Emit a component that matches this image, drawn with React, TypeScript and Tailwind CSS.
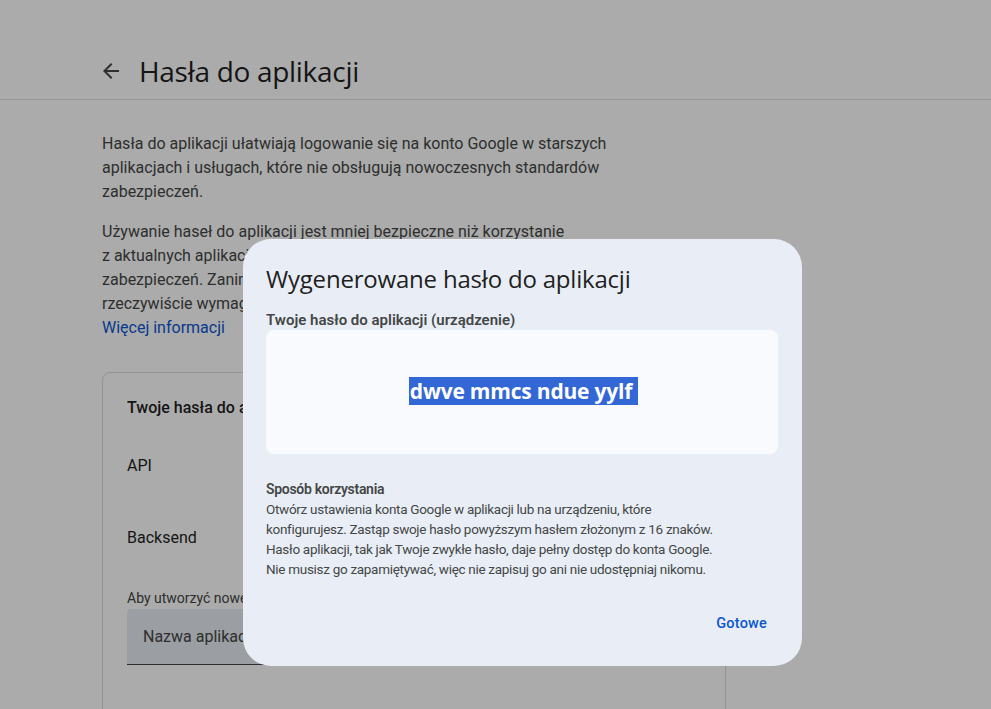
import { useState } from 'react'

const body = { fontFamily: 'Roboto, "Liberation Sans", sans-serif' }
const display = { fontFamily: '"Open Sans", Roboto, sans-serif' }

function BackArrow() {
  return (
    <svg viewBox="0 0 24 24" className="w-6 h-6 fill-[#444746]">
      <path d="M20 11H7.83l5.59-5.59L12 4l-8 8 8 8 1.41-1.41L7.83 13H20v-2z" />
    </svg>
  )
}

export default function App() {
  const [open] = useState(true)
  return (
    <div className="relative h-[709px] w-full overflow-hidden bg-white text-[#1f1f1f]" style={body}>
      {/* page */}
      <header className="h-[100px] border-b border-[#e2e2e2] flex items-end pb-[10px]">
        <div className="flex items-center gap-[16px] pl-[99px]">
          <BackArrow />
          <h1 className="text-[28px] leading-[36px] tracking-[-0.3px] text-[#1f1f1f]" style={display}>
            Hasła do aplikacji
          </h1>
        </div>
      </header>

      <main className="pl-[102px] w-[640px] pt-[32px]">
        <p className="text-[16px] leading-[24px] text-[#444746]">
          Hasła do aplikacji ułatwiają logowanie się na konto Google w starszych
          <br />
          aplikacjach i usługach, które nie obsługują nowoczesnych standardów
          <br />
          zabezpieczeń.
        </p>
        <p className="mt-[16px] text-[16px] leading-[24px] text-[#444746]">
          Używanie haseł do aplikacji jest mniej bezpieczne niż korzystanie
          <br />
          z aktualnych aplikacji i usług, które obsługują nowoczesne standardy
          <br />
          zabezpieczeń. Zanim utworzysz hasło do aplikacji, sprawdź, czy jest ono
          <br />
          rzeczywiście wymagane do zalogowania się w aplikacji.
          <br />
          <a className="text-[#0b57d0]">Więcej informacji</a>
        </p>

        <section className="mt-[32px] w-[624px] rounded-[8px] border border-[#dadce0] px-[24px] pt-[23px] pb-[80px]">
          <h2 className="text-[16px] leading-[24px] font-medium text-[#1f1f1f]">Twoje hasła do aplikacji</h2>
          <div className="mt-[34px] flex items-center justify-between h-[24px]">
            <span className="text-[16px] text-[#1f1f1f]">API</span>
            <span className="text-[14px] text-[#444746]">Utworzono 12 mar</span>
          </div>
          <div className="mt-[48px] flex items-center justify-between h-[24px]">
            <span className="text-[16px] text-[#1f1f1f]">Backsend</span>
            <span className="text-[14px] text-[#444746]">Utworzono 3 lut</span>
          </div>
          <p className="mt-[38px] text-[14px] leading-[20px] text-[#444746]">
            Aby utworzyć nowe hasło do aplikacji, wpisz jej nazwę poniżej...
          </p>
          <div className="mt-[1px] h-[56px] w-[400px] rounded-t-[4px] bg-[#e7ecf2] border-b border-[#444746] flex items-center px-[16px]">
            <span className="text-[16px] text-[#444746]">Nazwa aplikacji</span>
          </div>
        </section>
      </main>

      {/* scrim */}
      <div className="absolute inset-0 bg-black/[0.33]" />

      {open && (
        <div className="absolute left-[243px] top-[239px] w-[559px] h-[427px] rounded-[28px] bg-[#e9eef6] px-[23px] pt-[24px] flex flex-col">
          <h2 className="text-[24px] leading-[32px] text-[#1f1f1f] tracking-[-0.2px]" style={display}>
            Wygenerowane hasło do aplikacji
          </h2>
          <div className="mt-[17px] text-[15px] leading-[16px] font-semibold text-[#444746]">
            Twoje hasło do aplikacji (urządzenie)
          </div>
          <div className="mt-[2px] h-[124px] w-[512px] rounded-[8px] bg-[#f8fafd] flex items-center justify-center">
            <span
              className="bg-[#3367d6] text-white text-[21px] leading-[28px] font-bold tracking-[-0.2px] pl-[1px] pr-[6px] -mt-[3px] ml-[3px]"
              style={display}
            >
              dwve mmcs ndue yylf
            </span>
          </div>
          <div className="mt-[25px] text-[14px] leading-[20px] font-semibold tracking-[-0.3px] text-[#444746]">
            Sposób korzystania
          </div>
          <p className="text-[13.5px] leading-[20px] tracking-[-0.3px] text-[#444746]">
            Otwórz ustawienia konta Google w aplikacji lub na urządzeniu, które
            <br />
            konfigurujesz. Zastąp swoje hasło powyższym hasłem złożonym z 16 znaków.
            <br />
            Hasło aplikacji, tak jak Twoje zwykłe hasło, daje pełny dostęp do konta Google.
            <br />
            Nie musisz go zapamiętywać, więc nie zapisuj go ani nie udostępniaj nikomu.
          </p>
          <div className="mt-auto mb-[22px] flex justify-end">
            <button className="h-[40px] px-[12px] rounded-full text-[14.5px] font-medium tracking-[0.2px] text-[#0b57d0]">
              Gotowe
            </button>
          </div>
        </div>
      )}
    </div>
  )
}
